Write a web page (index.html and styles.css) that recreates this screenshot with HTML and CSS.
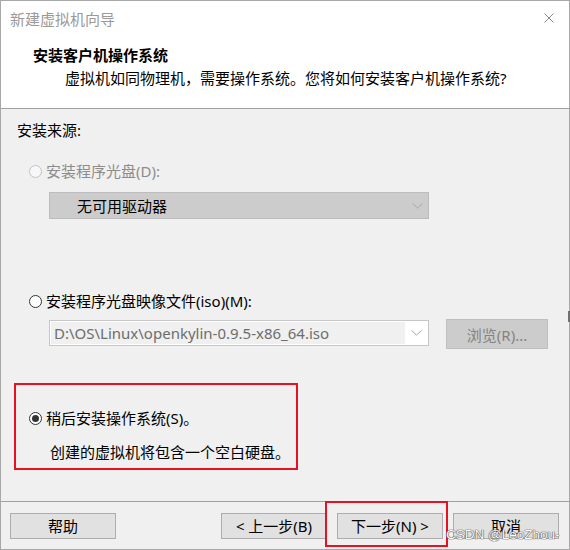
FILE: index.html
```html
<!DOCTYPE html>
<html lang="zh-CN">
<head>
<meta charset="utf-8">
<title>新建虚拟机向导</title>
<link rel="stylesheet" href="styles.css">
</head>
<body>
<div class="window">
  <div class="header">
    <div class="titlebar">
      <span class="title">新建虚拟机向导</span>
      <svg class="close" width="10" height="10" viewBox="0 0 10 10"><path d="M0.5 0.5 L9.5 9.5 M9.5 0.5 L0.5 9.5" stroke="#8a8a8a" stroke-width="1" fill="none"/></svg>
    </div>
    <div class="heading">安装客户机操作系统</div>
    <div class="subtitle">虚拟机如同物理机，需要操作系统。您将如何安装客户机操作系统?</div>
  </div>

  <div class="content">
    <div class="label">安装来源:</div>

    <div class="radio-row disabled row1">
      <span class="radio radio-disabled"></span>
      <span>安装程序光盘(D):</span>
    </div>
    <div class="dropdown">
      <span class="dropdown-text">无可用驱动器</span>
      <svg class="chev" width="11" height="6" viewBox="0 0 11 6"><path d="M0.5 0.5 L5.5 5 L10.5 0.5" stroke="#a8a8a8" fill="none"/></svg>
    </div>

    <div class="radio-row row2">
      <span class="radio"></span>
      <span>安装程序光盘映像文件(iso)(M):</span>
    </div>
    <div class="combo-row">
      <div class="combo">
        <span class="combo-field">D:\OS\Linux\openkylin-0.9.5-x86_64.iso</span>
        <span class="combo-arrow"><svg width="11" height="6" viewBox="0 0 11 6"><path d="M0.5 0.5 L5.5 5 L10.5 0.5" stroke="#a8a8a8" fill="none"/></svg></span>
      </div>
      <div class="browse">浏览(R)...</div>
    </div>

    <div class="later-box">
      <div class="radio-row">
        <span class="radio radio-checked"></span>
        <span>稍后安装操作系统(S)。</span>
      </div>
      <div class="later-desc">创建的虚拟机将包含一个空白硬盘。</div>
    </div>
  </div>

  <div class="footer">
    <div class="btn">帮助</div>
    <div class="nav">
      <div class="btn">&lt; 上一步(B)</div>
      <div class="btn next">下一步(N) &gt;<span class="mark"></span></div>
      <div class="btn">取消</div>
    </div>
  </div>

  <span class="edge-mark"></span>
  <div class="watermark">CSDN @LeoZhou-</div>
</div>
</body>
</html>
```

FILE: styles.css
```css
* { box-sizing: border-box; }
html, body { margin: 0; padding: 0; background: #f0f0f0; }
body {
  font-family: "Noto Sans", "Noto Sans CJK SC", sans-serif;
  font-size: 15px;
  color: #000;
}
.window {
  position: relative;
  width: 570px;
  height: 550px;
  border: 1px solid #a8a8a8;
  background: #f0f0f0;
  display: flex;
  flex-direction: column;
}
.header {
  background: #fff;
  height: 108px;
  border-bottom: 1px solid #a0a0a0;
  padding-top: 8px;
}
.titlebar {
  display: flex;
  align-items: center;
  justify-content: space-between;
  height: 20px;
  padding-left: 9px;
  padding-right: 15px;
  line-height: 20px;
}
.title { color: #9a9a9a; }
.close { display: block; margin-top: -2px; }
.heading {
  margin-top: 16px;
  margin-left: 32px;
  line-height: 20px;
  font-weight: bold;
}
.subtitle {
  margin-top: 3px;
  margin-left: 64px;
  line-height: 20px;
}
.content {
  flex: 1;
  display: flex;
  flex-direction: column;
  align-items: flex-start;
}
.label {
  margin-top: 11px;
  margin-left: 16px;
  line-height: 20px;
}
.radio-row {
  display: flex;
  align-items: center;
  gap: 4px;
  line-height: 20px;
  margin-left: 28px;
}
.radio-row.disabled { color: #8c8c8c; }
.row1 { margin-top: 21px; }
.row2 { margin-top: 72px; }
.radio {
  width: 13px;
  height: 13px;
  border-radius: 50%;
  border: 1px solid #333;
  background: #fff;
  position: relative;
  flex: none;
}
.radio-disabled { border-color: #c2c2c2; background: #f7f7f7; }
.radio-checked::after {
  content: "";
  position: absolute;
  left: 2px; top: 2px;
  width: 7px; height: 7px;
  border-radius: 50%;
  background: #333;
}
.dropdown {
  margin-top: 11px;
  margin-left: 48px;
  width: 380px;
  height: 27px;
  background: #cccccc;
  border: 1px solid #bcbcbc;
  display: flex;
  align-items: center;
  justify-content: space-between;
  padding-left: 27px;
  padding-right: 5px;
}
.chev { display: block; }
.combo-row {
  margin-top: 8px;
  margin-left: 48px;
  display: flex;
  align-items: flex-start;
  gap: 17px;
}
.combo {
  margin-top: 1px;
  width: 380px;
  height: 26px;
  background: #fff;
  border: 1px solid #c6c6c6;
  display: flex;
  padding: 1px;
}
.combo-field {
  width: 354px;
  background: #f0f0f0;
  color: #6d6d6d;
  line-height: 22px;
  padding-left: 3px;
  white-space: nowrap;
  overflow: hidden;
}
.combo-arrow {
  flex: 1;
  display: flex;
  align-items: center;
  justify-content: center;
}
.combo-arrow svg { display: block; }
.browse {
  width: 102px;
  height: 30px;
  background: #cccccc;
  border: 1px solid #bfbfbf;
  color: #838383;
  display: flex;
  align-items: center;
  justify-content: center;
}
.later-box {
  margin-top: 34px;
  margin-left: 13px;
  width: 284px;
  border: 2px solid #e81123;
  padding: 23px 0 6px 0;
}
.later-box .radio-row { margin-left: 13px; }
.later-desc {
  margin-top: 14px;
  margin-left: 34px;
  line-height: 20px;
}
.footer {
  height: 48px;
  border-top: 1px solid #a0a0a0;
  padding: 11px 10px 0 9px;
  display: flex;
  align-items: flex-start;
  justify-content: space-between;
}
.nav { display: flex; gap: 10px; }
.btn {
  position: relative;
  width: 106px;
  height: 26px;
  background: #e1e1e1;
  border: 1px solid #adadad;
  display: flex;
  align-items: center;
  justify-content: center;
  line-height: 20px;
}
.mark {
  position: absolute;
  left: -13px;
  top: -13px;
  width: 123px;
  height: 46px;
  border: 2px solid #e81123;
  pointer-events: none;
}
.edge-mark {
  position: absolute;
  right: -1px;
  top: 310px;
  width: 2px;
  height: 11px;
  background: #707070;
}
.watermark {
  position: absolute;
  left: 445px;
  top: 526px;
  font-family: "Liberation Sans", Arial, sans-serif;
  font-size: 13.5px;
  line-height: 16px;
  color: #fafafa;
  text-shadow: 0 0 1px #444, 0 0 1px #555, 0 0 1px #666;
}
```
